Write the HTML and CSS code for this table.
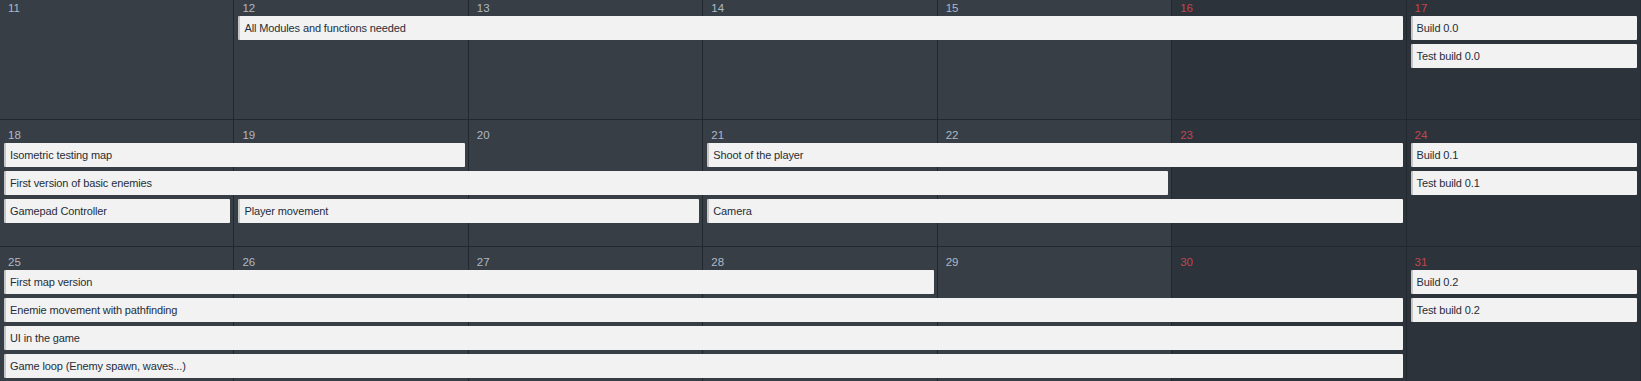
FILE: index.html
```html
<!DOCTYPE html>
<html>
<head>
<meta charset="utf-8">
<link rel="stylesheet" href="styles.css">
</head>
<body>
<div class="calendar">
  <div class="week">
    <div class="day c1"><span class="num">11</span></div>
    <div class="day c2"><span class="num">12</span></div>
    <div class="day c3"><span class="num">13</span></div>
    <div class="day c4"><span class="num">14</span></div>
    <div class="day c5"><span class="num">15</span></div>
    <div class="day c6 weekend"><span class="num">16</span></div>
    <div class="day c7 weekend last"><span class="num">17</span></div>
    <div class="event c2 s5 l1">All Modules and functions needed</div>
    <div class="event c7 s1 l1">Build 0.0</div>
    <div class="event c7 s1 l2">Test build 0.0</div>
  </div>
  <div class="week">
    <div class="day c1"><span class="num">18</span></div>
    <div class="day c2"><span class="num">19</span></div>
    <div class="day c3"><span class="num">20</span></div>
    <div class="day c4"><span class="num">21</span></div>
    <div class="day c5"><span class="num">22</span></div>
    <div class="day c6 weekend"><span class="num">23</span></div>
    <div class="day c7 weekend last"><span class="num">24</span></div>
    <div class="event c1 s2 l1">Isometric testing map</div>
    <div class="event c4 s3 l1">Shoot of the player</div>
    <div class="event c7 s1 l1">Build 0.1</div>
    <div class="event c1 s5 l2">First version of basic enemies</div>
    <div class="event c7 s1 l2">Test build 0.1</div>
    <div class="event c1 s1 l3">Gamepad Controller</div>
    <div class="event c2 s2 l3">Player movement</div>
    <div class="event c4 s3 l3">Camera</div>
  </div>
  <div class="week">
    <div class="day c1"><span class="num">25</span></div>
    <div class="day c2"><span class="num">26</span></div>
    <div class="day c3"><span class="num">27</span></div>
    <div class="day c4"><span class="num">28</span></div>
    <div class="day c5"><span class="num">29</span></div>
    <div class="day c6 weekend"><span class="num">30</span></div>
    <div class="day c7 weekend last"><span class="num">31</span></div>
    <div class="event c1 s4 l1">First map version</div>
    <div class="event c7 s1 l1">Build 0.2</div>
    <div class="event c1 s6 l2">Enemie movement with pathfinding</div>
    <div class="event c7 s1 l2">Test build 0.2</div>
    <div class="event c1 s6 l3">UI in the game</div>
    <div class="event c1 s6 l4">Game loop (Enemy spawn, waves...)</div>
  </div>
</div>
</body>
</html>
```
FILE: styles.css
```css
html, body {
  margin: 0;
  padding: 0;
  background: #2d333b;
  overflow: hidden;
}
.calendar {
  margin-top: -7px;
  font-family: "Liberation Sans", Arial, sans-serif;
  font-size: 11px;
}
.week {
  display: grid;
  grid-template-columns: repeat(7, 1fr);
  grid-template-rows: 23px repeat(4, auto) 1fr;
  min-height: 126px;
  border-bottom: 1px solid #22282e;
}
.day {
  grid-row: 1 / -1;
  background: #373e46;
  border-right: 1px solid #22282e;
  min-width: 0;
}
.day.weekend {
  background: #2d333b;
}
.day.last {
  border-right: 1px solid #262c33;
}
.num {
  display: block;
  padding: 8px 0 0 8px;
  line-height: 14px;
  font-size: 11.5px;
  color: #aeb9c5;
}
.weekend .num {
  color: #c0474d;
}
.event {
  height: 24px;
  margin: 0 4px 4px 4px;
  box-sizing: border-box;
  background: #f2f2f2;
  border-left: 2px solid #c6c6c6;
  border-radius: 1px;
  padding-left: 4px;
  line-height: 24px;
  color: #262d38;
  letter-spacing: -0.12px;
  white-space: nowrap;
  overflow: hidden;
  min-width: 0;
  align-self: start;
}
.c1 { grid-column-start: 1; }
.c2 { grid-column-start: 2; }
.c3 { grid-column-start: 3; }
.c4 { grid-column-start: 4; }
.c5 { grid-column-start: 5; }
.c6 { grid-column-start: 6; }
.c7 { grid-column-start: 7; }
.s1 { grid-column-end: span 1; }
.s2 { grid-column-end: span 2; }
.s3 { grid-column-end: span 3; }
.s4 { grid-column-end: span 4; }
.s5 { grid-column-end: span 5; }
.s6 { grid-column-end: span 6; }
.l1 { grid-row: 2; }
.l2 { grid-row: 3; }
.l3 { grid-row: 4; }
.l4 { grid-row: 5; }
```
